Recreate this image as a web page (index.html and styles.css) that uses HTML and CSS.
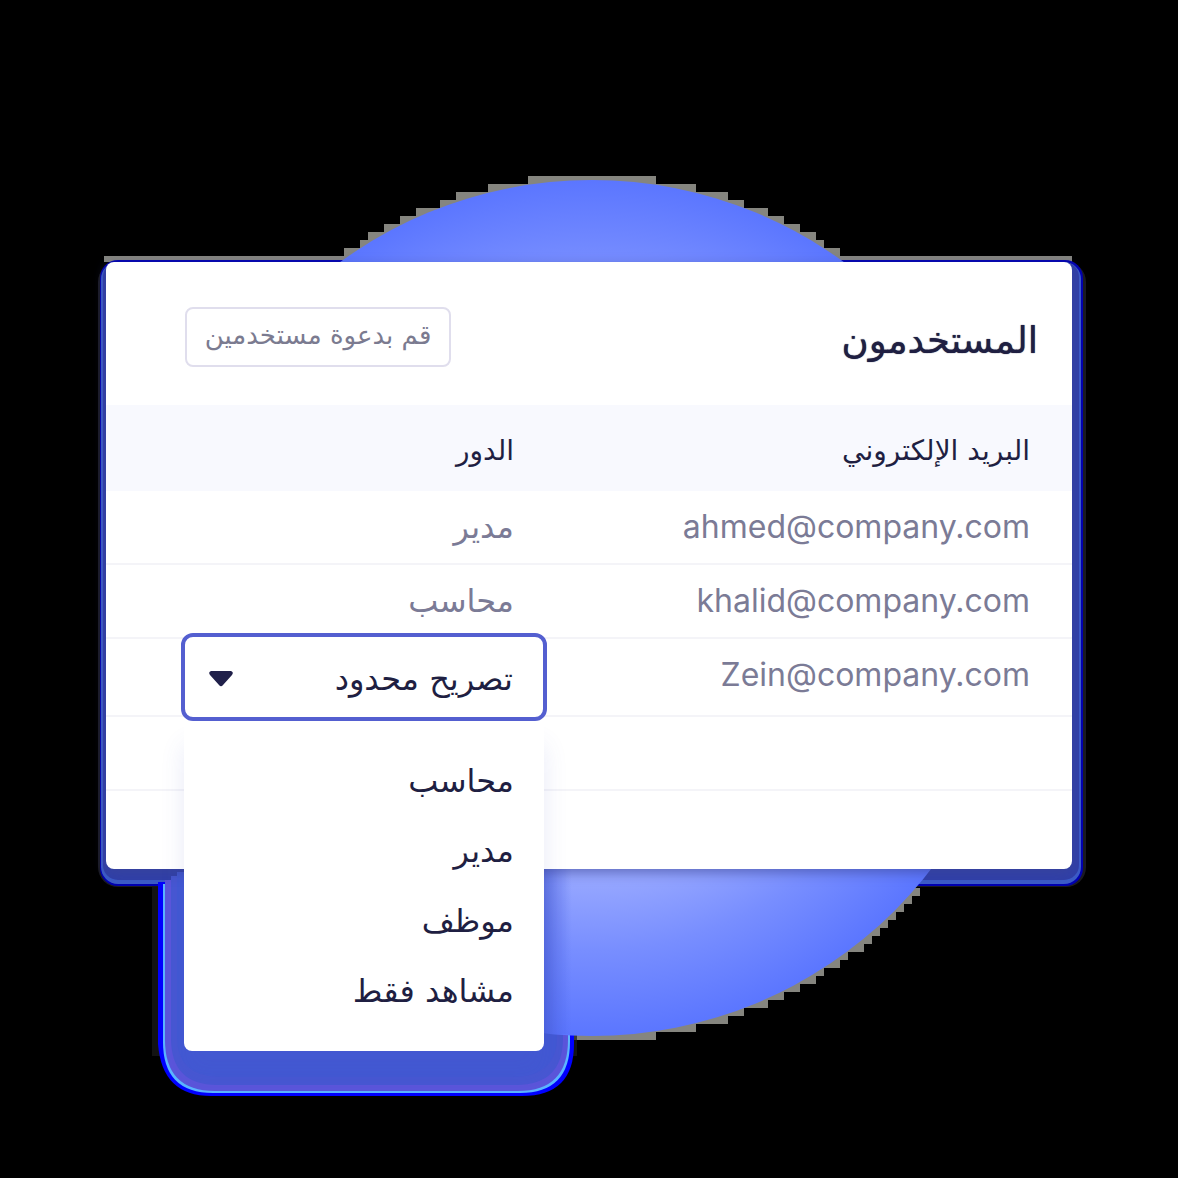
FILE: index.html
```html
<!DOCTYPE html>
<html lang="ar" dir="rtl">
<head>
<meta charset="utf-8">
<meta name="viewport" content="width=device-width, initial-scale=1">
<title>المستخدمون</title>
<link rel="stylesheet" href="styles.css">
</head>
<body>
<main class="scene">
  <svg class="backdrop" viewBox="0 0 1178 1178" aria-hidden="true">
    <defs>
      <radialGradient id="disc" gradientUnits="userSpaceOnUse" cx="592" cy="608" r="428">
        <stop offset="0" stop-color="#b4c0ff"/>
        <stop offset=".62" stop-color="#99a9ff"/>
        <stop offset=".8" stop-color="#788eff"/>
        <stop offset="1" stop-color="#5b76ff"/>
      </radialGradient>
      <linearGradient id="edge">
        <stop offset="0" stop-color="#4055cc" stop-opacity=".75"/>
        <stop offset="1" stop-color="#5068e8" stop-opacity="0"/>
      </linearGradient>
    </defs>
    <!-- card halo -->
    <path d="M104 256H1072V262H104Z" fill="#85857f"/>
    <rect x="98" y="262" width="988" height="625" rx="20" fill="#1b1b24"/>
    <rect x="100" y="260" width="983" height="626" rx="18" fill="#0000b0"/>
    <rect x="101" y="262" width="980" height="622" rx="17" fill="#3c5cc8"/>
    <rect x="103" y="262" width="976" height="618" rx="15" fill="#303fa8"/>
    <!-- stepped rim of the disc -->
    <path shape-rendering="crispEdges" fill="#85857f" d="M528 176H656V184H696V192H728V200H744V208H768V216H784V224H800V232H816V240H824V248H840V264H344V248H360V240H368V232H384V224H400V216H416V208H440V200H456V192H488V184H528Z"/>
    <path shape-rendering="crispEdges" fill="#85857f" d="M560 888H920V896H912V904H904V912H896V920H888V928H880V936H872V944H864V952H848V960H840V968H824V976H816V984H800V992H784V1000H768V1008H744V1016H728V1024H696V1032H656V1040H560Z"/>
    <!-- menu halo -->
    <path d="M152 886H577V1056H164V1056H152Z" fill="#1b1b1b" opacity=".7"/>
    <path d="M158 882H574V1044Q574 1096 522 1096H211Q162 1096 158 1044Z" fill="#0000ff"/>
    <path d="M163 884H570V1042Q570 1093 520 1093H213Q163 1093 163 1042Z" fill="#5cb5ff"/>
    <path d="M165 880H568V1040Q568 1091 518 1091H215Q165 1091 165 1040Z" fill="#5b55da"/>
    <path d="M171 876H563V1038Q563 1085 516 1085H217Q171 1085 171 1038Z" fill="#4757d2"/>
    <path d="M177 872H557V1036Q557 1077 512 1077H220Q177 1077 177 1036Z" fill="#4258d3"/>
    <circle cx="592" cy="608" r="428" fill="url(#disc)"/>
    <rect x="540" y="860" width="32" height="174" fill="url(#edge)"/>
  </svg>

  <section class="card">
    <header class="card-head">
      <h1 class="title">المستخدمون</h1>
      <button class="invite" type="button">قم بدعوة مستخدمين</button>
    </header>
    <table class="users">
      <thead>
        <tr><th scope="col">البريد الإلكتروني</th><th scope="col" class="role">الدور</th></tr>
      </thead>
      <tbody>
        <tr><td><span class="email">ahmed@company.com</span></td><td>مدير</td></tr>
        <tr><td><span class="email">khalid@company.com</span></td><td>محاسب</td></tr>
        <tr class="editing">
          <td><span class="email">Zein@company.com</span></td>
          <td class="picker-cell">
            <div class="picker">
              <select class="picker-select" aria-label="الدور">
                <option selected>تصريح محدود</option>
                <option>محاسب</option>
                <option>مدير</option>
                <option>موظف</option>
                <option>مشاهد فقط</option>
              </select>
              <svg class="caret" viewBox="0 0 26 18" aria-hidden="true"><path d="M3 1H23Q26 2 24 5L15 15Q13 17.500 11 15L2 5Q0 2 3 1Z" fill="#20204a"/></svg>
              <ul class="menu" role="listbox" aria-label="الأدوار">
                <li role="option">محاسب</li>
                <li role="option">مدير</li>
                <li role="option">موظف</li>
                <li role="option">مشاهد فقط</li>
              </ul>
            </div>
          </td>
        </tr>
        <tr><td></td><td></td></tr>
        <tr><td></td><td></td></tr>
      </tbody>
    </table>
  </section>
</main>
</body>
</html>
```
FILE: styles.css
```css
* { box-sizing: border-box; }

body {
  margin: 0;
  background: #000;
  color: #1f1f42;
  font-family: "DejaVu Sans", sans-serif;
}

.scene {
  position: relative;
  min-height: 100vh;
  padding: 262px 106px 0;
  overflow: hidden;
}

.backdrop {
  position: absolute;
  top: 0;
  left: 0;
  width: 100%;
}

.card {
  position: relative;
  background: #fff;
  border-radius: 8px;
  box-shadow: 0 4px 12px rgba(60, 70, 150, .6);
}

.card-head {
  display: flex;
  justify-content: space-between;
  align-items: center;
  height: 143px;
  padding: 6px 34px 0 79px;
}

.title {
  margin: 0;
  padding-top: 8px;
  font-size: 37px;
  font-weight: 400;
  text-shadow: 0 0 1px #1f1f42;
}

.invite {
  width: 266px;
  height: 60px;
  padding: 0 0 4px;
  border: 2px solid #e0deed;
  border-radius: 8px;
  background: #fff;
  color: #7b7b90;
  font: 26px "DejaVu Sans", sans-serif;
  white-space: nowrap;
}

.users {
  width: 100%;
  table-layout: fixed;
  border-collapse: separate;
  border-spacing: 0;
}

.users th {
  height: 86px;
  padding: 4px 42px 0;
  background: #f8f9fe;
  font-size: 28px;
  font-weight: 400;
  text-align: start;
}

.users .role { width: 450px; }

.users td {
  height: 74px;
  padding: 0 42px;
  border-bottom: 2px solid #f4f4f8;
  color: #7b7b96;
  font-size: 32px;
  line-height: 40px;
  text-align: start;
}

.users .editing td { height: 78px; padding-bottom: 4px; }

.users tr:last-child td { border-bottom: 0; height: 78px; }

.email {
  font-family: Inter, sans-serif;
  font-size: 32px;
  direction: ltr;
}

.users .picker-cell { position: relative; }

.picker {
  position: absolute;
  top: -6px;
  right: 9px;
  width: 366px;
}

.picker-select {
  position: relative;
  z-index: 1;
  display: block;
  width: 100%;
  height: 88px;
  padding: 4px 30px 0;
  border: 4px solid #545fd0;
  border-radius: 12px;
  background: #fff;
  color: #1f1f42;
  font: 32px "DejaVu Sans", sans-serif;
  appearance: none;
}

.caret {
  position: absolute;
  z-index: 2;
  top: 37px;
  left: 27px;
  width: 26px;
  height: 18px;
}

.menu {
  margin: 0 3px;
  padding: 25px 30px;
  border-radius: 0 0 8px 8px;
  background: #fff;
  box-shadow: 0 24px 24px rgba(70, 90, 200, .12);
  color: #1f1f42;
  list-style: none;
}

.menu li {
  height: 70px;
  line-height: 70px;
}
```
